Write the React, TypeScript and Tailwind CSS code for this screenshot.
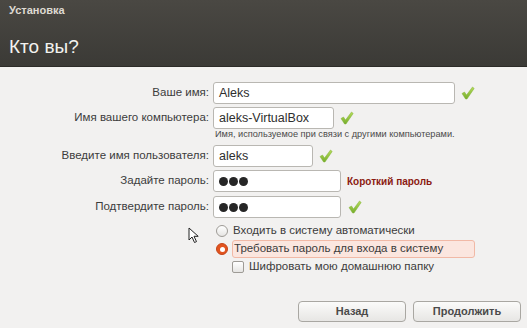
import React from "react"

function Check() {
  return (
    <svg width="14" height="14" viewBox="0 0 14 14" className="shrink-0">
      <defs>
        <linearGradient id="ck" x1="0" y1="0" x2="0" y2="1">
          <stop offset="0" stopColor="#b6dc5a" />
          <stop offset="1" stopColor="#76ad2c" />
        </linearGradient>
      </defs>
      <path d="M1 7.5 L3.5 6 L5.5 9 L11.5 1 L13.2 2.4 L6 13 L4.6 13 Z" fill="url(#ck)" stroke="#80b236" strokeWidth="0.5" strokeLinejoin="round" />
    </svg>
  )
}

function Dots() {
  return (
    <div className="flex gap-[1px]">
      <span className="w-[9px] h-[9px] rounded-full bg-[#262626]" />
      <span className="w-[9px] h-[9px] rounded-full bg-[#262626]" />
      <span className="w-[9px] h-[9px] rounded-full bg-[#262626]" />
    </div>
  )
}

function Field({ label, value, width, after, dots }: { label: string; value: string; width: string; after?: React.ReactNode; dots?: boolean }) {
  return (
    <div className="flex items-center h-[22px]">
      <div className="w-[213px] pr-[4px] text-right text-[11.5px] text-[#3c3c3c]">{label}</div>
      <div className={`${width} h-[22px] bg-white border border-[#b9b7b2] rounded-[3px] flex items-center px-[5px] text-[12.5px] text-[#2e2e2e]`}>
        {dots ? <Dots /> : value}
      </div>
      <div className="ml-[6px] flex items-center">{after}</div>
    </div>
  )
}

export default function App() {
  return (
    <div className="relative w-[527px] h-[328px] bg-[#f2f1f0] overflow-hidden" style={{ fontFamily: '"Liberation Sans", "Noto Sans", sans-serif' }}>
      {/* header */}
      <div className="h-[67px] bg-gradient-to-b from-[#4a4843] to-[#3b3a36] border-b border-[#2c2b28] px-[9px]">
        <div className="pt-[2px] text-[11px] font-bold text-[#dedad2]">Установка</div>
        <div className="mt-[18px] text-[19px] font-normal text-[#f3f2ef] leading-none">Кто вы?</div>
      </div>

      {/* form */}
      <div className="pt-[15px] flex flex-col">
        <Field label="Ваше имя:" value="Aleks" width="w-[242px]" after={<Check />} />
        <div className="mt-[3px]">
          <Field label="Имя вашего компьютера:" value="aleks-VirtualBox" width="w-[121px]" after={<Check />} />
        </div>
        <div className="pl-[215px] mt-[-1px] h-[12px] text-[9.2px] leading-[12px] text-[#4a4a4a]">Имя, используемое при связи с другими компьютерами.</div>
        <div className="mt-[5px]">
          <Field label="Введите имя пользователя:" value="aleks" width="w-[100px]" after={<Check />} />
        </div>
        <div className="mt-[3px]">
          <Field label="Задайте пароль:" value="" dots width="w-[128px]" after={<span className="text-[10px] font-bold text-[#8b1a12]">Короткий пароль</span>} />
        </div>
        <div className="mt-[4px]">
          <Field label="Подтвердите пароль:" value="" dots width="w-[128px]" after={<span className="ml-[1px]"><Check /></span>} />
        </div>

        {/* options */}
        <div className="pl-[216px] mt-[4px] flex flex-col text-[11.5px] text-[#3c3c3c]">
          <div className="flex items-center h-[18px]">
            <span className="w-[12px] h-[12px] rounded-full border border-[#9e9b96] bg-gradient-to-b from-white to-[#e6e5e3]" />
            <span className="ml-[5px]">Входить в систему автоматически</span>
          </div>
          <div className="flex items-center h-[18px]">
            <span className="w-[12px] h-[12px] rounded-full bg-[#e2541f] border border-[#c5461a] flex items-center justify-center">
              <span className="w-[5px] h-[5px] rounded-full bg-white" />
            </span>
            <span className="ml-[4px] w-[243px] h-[18px] pl-[1px] flex items-center bg-[#fbe6df] border border-[#f1b9a6] rounded-[3px]">Требовать пароль для входа в систему</span>
          </div>
          <div className="flex items-center h-[18px] pl-[16px]">
            <span className="w-[12px] h-[12px] rounded-[2px] border border-[#9e9b96] bg-gradient-to-b from-white to-[#e6e5e3]" />
            <span className="ml-[5px]">Шифровать мою домашнюю папку</span>
          </div>
        </div>
      </div>

      {/* buttons */}
      <div className="absolute left-[298px] top-[301px] flex gap-[7px]">
        <button className="w-[108px] h-[21px] rounded-[4px] border border-[#a9a7a2] bg-gradient-to-b from-[#fbfbfa] to-[#e7e6e4] text-[11px] font-bold text-[#4a4a4a]">Назад</button>
        <button className="w-[108px] h-[21px] rounded-[4px] border border-[#a9a7a2] bg-gradient-to-b from-[#fbfbfa] to-[#e7e6e4] text-[11px] font-bold text-[#4a4a4a]">Продолжить</button>
      </div>

      {/* mouse pointer */}
      <svg className="absolute left-[188px] top-[227px]" width="12" height="17" viewBox="0 0 12 17">
        <path d="M1 1 L1 13 L4 10 L6.5 15.5 L8.5 14.6 L6 9.3 L10.2 9.3 Z" fill="#fff" stroke="#222" strokeWidth="1" strokeLinejoin="round" />
      </svg>
    </div>
  )
}
